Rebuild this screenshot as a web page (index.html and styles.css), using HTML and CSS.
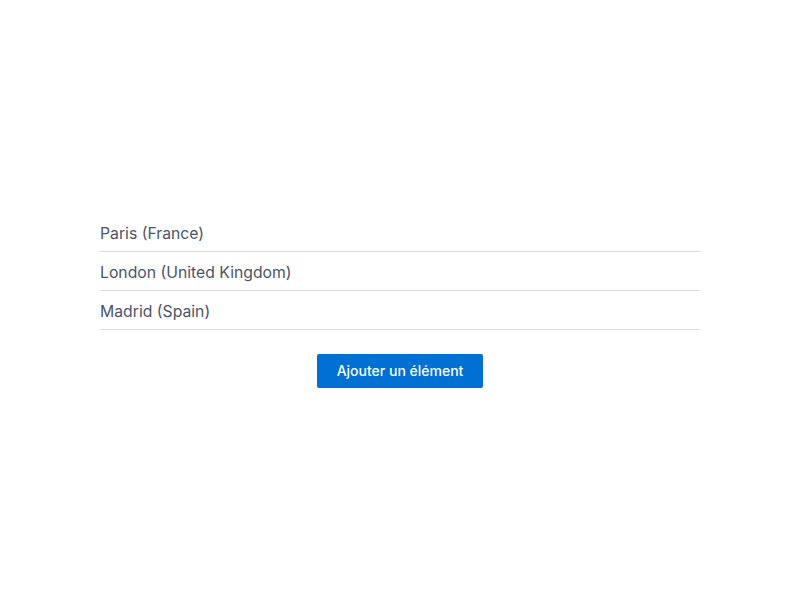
FILE: index.html
```html
<!DOCTYPE html>
<html lang="fr">
<head>
<meta charset="utf-8">
<link rel="stylesheet" href="styles.css">
</head>
<body>
<main class="page">
  <section class="panel">
    <ul class="list">
      <li class="item">Paris (France)</li>
      <li class="item">London (United Kingdom)</li>
      <li class="item">Madrid (Spain)</li>
    </ul>
    <button class="add-btn" type="button">Ajouter un élément</button>
  </section>
</main>
</body>
</html>
```
FILE: styles.css
```css
html, body {
  margin: 0;
  padding: 0;
  background: #ffffff;
}
body {
  font-family: "Inter", "Lato", sans-serif;
}
.page {
  height: 600px;
  display: flex;
  align-items: center;
  justify-content: center;
}
.panel {
  width: 600px;
  display: flex;
  flex-direction: column;
  align-items: center;
  gap: 24px;
}
.list {
  list-style: none;
  margin: 0;
  padding: 0;
  width: 100%;
}
.item {
  font-size: 15.75px;
  line-height: 22px;
  padding: 10px 0 6px;
  color: #4b5468;
  border-bottom: 1px solid #dddbda;
}
.add-btn {
  height: 34px;
  width: 166px;
  border: none;
  border-radius: 2px;
  background: #0070d2;
  color: #ffffff;
  font-family: "Inter", "Lato", sans-serif;
  font-size: 14px;
  font-weight: 500;
  padding: 0;
  cursor: pointer;
}
```
